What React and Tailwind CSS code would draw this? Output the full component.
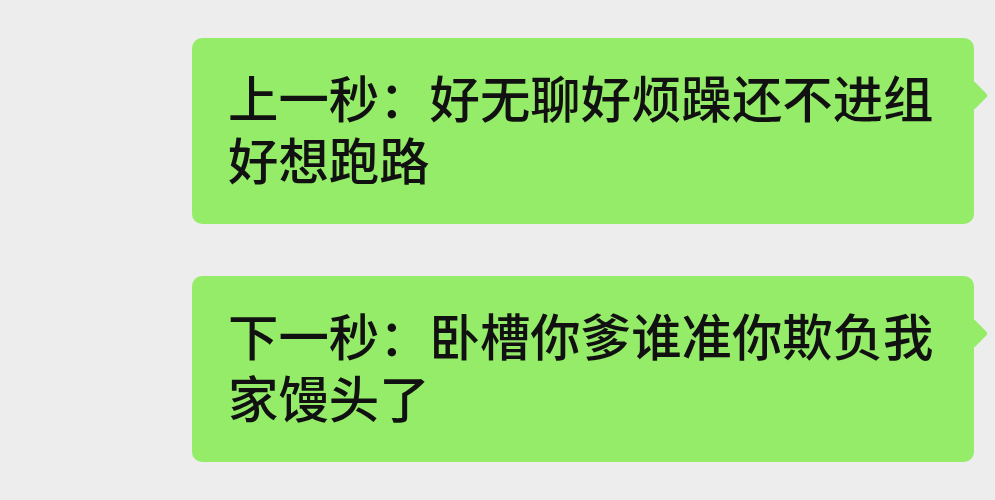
const messages = [
  { id: 1, text: "上一秒：好无聊好烦躁还不进组好想跑路" },
  { id: 2, text: "下一秒：卧槽你爹谁准你欺负我家馒头了" },
];

function Bubble({ text }) {
  return (
    <div className="relative rounded-[10px] bg-[#95ec69] pl-[36px] pr-[30px] pt-[28px] pb-[34px]">
      <p className="text-[50.4px] leading-[62px] font-medium text-[#111111] break-all">
        {text}
      </p>
      {/* tail */}
      <div className="absolute -right-[10px] top-[47px] w-[21px] h-[21px] rotate-45 rounded-[3px] bg-[#95ec69]" />
    </div>
  );
}

export default function App() {
  return (
    <div
      className="w-[995px] h-[500px] overflow-hidden bg-[#ededed] pt-[38px] pl-[192px] pr-[21px] flex flex-col gap-[52px]"
      style={{ fontFamily: '"Noto Sans CJK SC", "Noto Sans", sans-serif' }}
    >
      {messages.map((m) => (
        <Bubble key={m.id} text={m.text} />
      ))}
    </div>
  );
}
